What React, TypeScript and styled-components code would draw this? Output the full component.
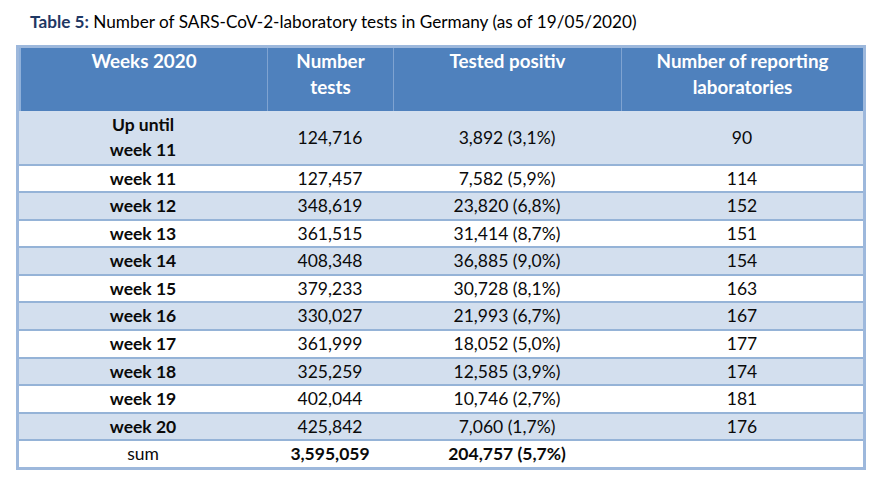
import React from "react";
import styled, { createGlobalStyle } from "styled-components";

const Global = createGlobalStyle`
  html, body { margin: 0; padding: 0; background: #ffffff; }
  body { font-family: "Lato", "Open Sans", sans-serif; color: #000; }
`;

const Page = styled.div`
  width: 876px;
  height: 477px;
  padding: 9px 0 0 16px;
  box-sizing: border-box;
  background: #fff;
`;

const Caption = styled.div`
  padding-left: 14px;
  font-size: 17.2px;
  line-height: 26px;
  height: 36px;
  color: #000;
`;

const CaptionLabel = styled.span`
  font-weight: 700;
  color: #1f3864;
`;

const Table = styled.table`
  width: 850px;
  border-collapse: separate;
  border-spacing: 0;
  table-layout: fixed;
  border: 3px solid #9db8dc;
  font-size: 17.5px;
`;

const HeadCell = styled.th`
  background: #4f81bd;
  color: #fff;
  font-weight: 700;
  font-size: 18.8px;
  vertical-align: top;
  text-align: center;
  line-height: 26px;
  height: 63px;
  padding: 0;
  border-left: 1px solid #7fa3d1;
  &:first-child { border-left: 2px solid #8fb0da; }
`;

const Row = styled.tr<{ $shaded: boolean }>`
  background: ${(p) => (p.$shaded ? "#d3dfee" : "#ffffff")};
`;

const Cell = styled.td<{ $bold?: boolean; $tall?: boolean; $last?: boolean }>`
  text-align: center;
  vertical-align: middle;
  padding: 0;
  height: ${(p) => (p.$tall ? "52.5px" : "25.6px")};
  line-height: ${(p) => (p.$tall ? "25.5px" : "25.6px")};
  font-weight: ${(p) => (p.$bold ? 700 : 400)};
  border-bottom: ${(p) => (p.$last ? "0" : "2px solid #95b3d7")};
  color: #0a0a0a;
`;

const rows: [string, string, string, string][] = [
  ["week 11", "127,457", "7,582 (5,9%)", "114"],
  ["week 12", "348,619", "23,820 (6,8%)", "152"],
  ["week 13", "361,515", "31,414 (8,7%)", "151"],
  ["week 14", "408,348", "36,885 (9,0%)", "154"],
  ["week 15", "379,233", "30,728 (8,1%)", "163"],
  ["week 16", "330,027", "21,993 (6,7%)", "167"],
  ["week 17", "361,999", "18,052 (5,0%)", "177"],
  ["week 18", "325,259", "12,585 (3,9%)", "174"],
  ["week 19", "402,044", "10,746 (2,7%)", "181"],
  ["week 20", "425,842", "7,060 (1,7%)", "176"],
];

export default function App() {
  return (
    <Page>
      <Global />
      <Caption>
        <CaptionLabel>Table 5:</CaptionLabel> Number of SARS-CoV-2-laboratory tests in Germany (as of 19/05/2020)
      </Caption>
      <Table>
        <colgroup>
          <col style={{ width: 248 }} />
          <col style={{ width: 126 }} />
          <col style={{ width: 228 }} />
          <col style={{ width: 242 }} />
        </colgroup>
        <thead>
          <tr>
            <HeadCell>Weeks 2020</HeadCell>
            <HeadCell>
              Number
              <br />
              tests
            </HeadCell>
            <HeadCell>Tested positiv</HeadCell>
            <HeadCell>
              Number of reporting
              <br />
              laboratories
            </HeadCell>
          </tr>
        </thead>
        <tbody>
          <Row $shaded>
            <Cell $bold $tall>
              Up until
              <br />
              week 11
            </Cell>
            <Cell $tall>124,716</Cell>
            <Cell $tall>3,892 (3,1%)</Cell>
            <Cell $tall>90</Cell>
          </Row>
          {rows.map((r, i) => (
            <Row key={r[0]} $shaded={i % 2 === 1}>
              <Cell $bold>{r[0]}</Cell>
              <Cell>{r[1]}</Cell>
              <Cell>{r[2]}</Cell>
              <Cell>{r[3]}</Cell>
            </Row>
          ))}
          <Row $shaded={false}>
            <Cell $last>sum</Cell>
            <Cell $bold $last>3,595,059</Cell>
            <Cell $bold $last>204,757 (5,7%)</Cell>
            <Cell $last></Cell>
          </Row>
        </tbody>
      </Table>
    </Page>
  );
}
